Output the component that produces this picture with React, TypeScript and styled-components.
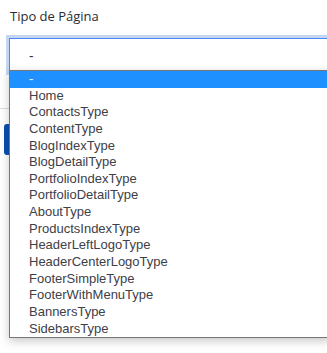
import React from 'react';
import styled, { createGlobalStyle } from 'styled-components';

const GlobalStyle = createGlobalStyle`
  html, body {
    margin: 0;
    padding: 0;
    background: #ffffff;
  }
  body {
    font-family: 'Open Sans', 'Noto Sans', sans-serif;
    overflow: hidden;
  }
`;

const Page = styled.div`
  position: relative;
  width: 327px;
  height: 353px;
  overflow: hidden;
`;

const FieldLabel = styled.label`
  display: block;
  padding: 6px 0 0 10px;
  font-size: 13px;
  line-height: 20px;
  color: #2b2b35;
`;

const SelectField = styled.div`
  margin: 12px 0 0 9px;
  height: 32px;
  display: flex;
  align-items: center;
  padding-left: 19px;
  background: #ffffff;
  border: 1px solid #4a8af4;
  border-right: none;
  box-shadow: 0 0 0 3px #c4d6f0;
  font-size: 14px;
  color: #333333;
`;

const Divider = styled.hr`
  margin: 36px 0 0;
  border: none;
  border-top: 1px solid #dcdcdc;
`;

const SaveButton = styled.button`
  display: block;
  margin: 15px 0 0 4px;
  width: 90px;
  height: 31px;
  border: none;
  border-radius: 3px;
  background: #0b4fb1;
`;

const Popup = styled.ul`
  position: absolute;
  top: 70px;
  left: 9px;
  right: -4px;
  margin: 0;
  padding: 0;
  list-style: none;
  background: #ffffff;
  border: 1px solid #767676;
  box-shadow: 0 3px 9px rgba(0, 0, 0, 0.22);
  font-family: 'Liberation Sans', Arial, sans-serif;
  font-size: 13px;
`;

const Option = styled.li<{ $active?: boolean }>`
  height: 16.65px;
  line-height: 16.65px;
  padding-left: 19px;
  color: ${(p) => (p.$active ? '#ffffff' : '#404048')};
  background: ${(p) => (p.$active ? '#1e90ff' : 'transparent')};
  white-space: nowrap;
`;

const options = [
  '-',
  'Home',
  'ContactsType',
  'ContentType',
  'BlogIndexType',
  'BlogDetailType',
  'PortfolioIndexType',
  'PortfolioDetailType',
  'AboutType',
  'ProductsIndexType',
  'HeaderLeftLogoType',
  'HeaderCenterLogoType',
  'FooterSimpleType',
  'FooterWithMenuType',
  'BannersType',
  'SidebarsType',
];

export default function App() {
  return (
    <Page>
      <GlobalStyle />
      <FieldLabel>Tipo de Página</FieldLabel>
      <SelectField>-</SelectField>
      <Divider />
      <SaveButton />
      <Popup>
        {options.map((o, i) => (
          <Option key={o} $active={i === 0}>
            {o}
          </Option>
        ))}
      </Popup>
    </Page>
  );
}
